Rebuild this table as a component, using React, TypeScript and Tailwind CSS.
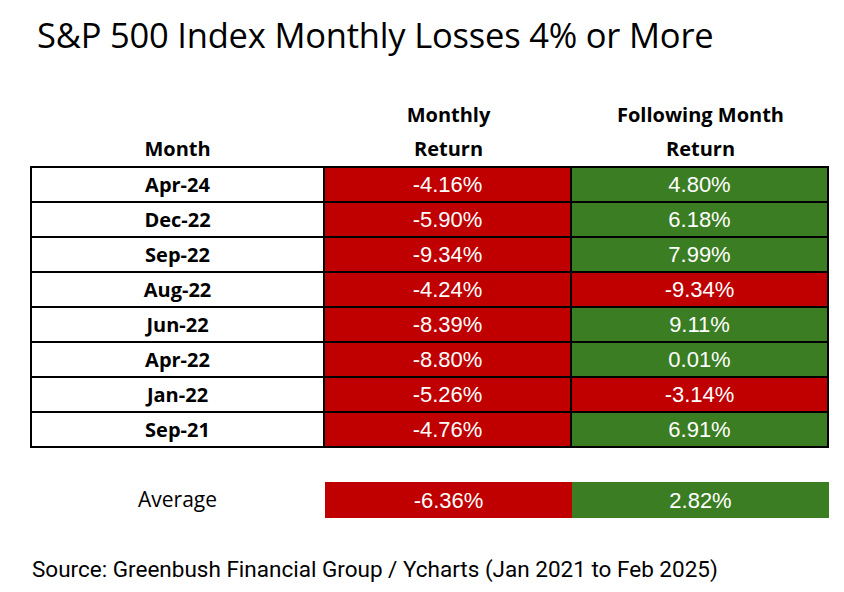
import React from 'react';

type Row = { month: string; ret: string; next: string; nextUp: boolean };

const rows: Row[] = [
  { month: 'Apr-24', ret: '-4.16%', next: '4.80%', nextUp: true },
  { month: 'Dec-22', ret: '-5.90%', next: '6.18%', nextUp: true },
  { month: 'Sep-22', ret: '-9.34%', next: '7.99%', nextUp: true },
  { month: 'Aug-22', ret: '-4.24%', next: '-9.34%', nextUp: false },
  { month: 'Jun-22', ret: '-8.39%', next: '9.11%', nextUp: true },
  { month: 'Apr-22', ret: '-8.80%', next: '0.01%', nextUp: true },
  { month: 'Jan-22', ret: '-5.26%', next: '-3.14%', nextUp: false },
  { month: 'Sep-21', ret: '-4.76%', next: '6.91%', nextUp: true },
];

const head = "font-['Open_Sans',sans-serif] font-bold text-[20px] text-black text-center";
const num = "font-['Liberation_Sans',Arial,sans-serif] text-[22px] text-white text-center";

export default function App() {
  return (
    <div className="w-[844px] h-[592px] bg-white overflow-hidden">
      <h1 className="pl-[37px] pt-[12px] h-[97px] font-['Open_Sans',sans-serif] text-[34.5px] text-black leading-[46px] tracking-[-0.2px]">
        S&amp;P 500 Index Monthly Losses 4% or More
      </h1>

      <div className="ml-[30px] w-[799px]">
        {/* header */}
        <div className="grid grid-cols-[295px_247px_257px]">
          <div className={`${head} h-[35px] leading-[35px]`}></div>
          <div className={`${head} h-[35px] leading-[35px]`}>Monthly</div>
          <div className={`${head} h-[35px] leading-[35px]`}>Following Month</div>
          <div className={`${head} h-[34px] leading-[34px]`}>Month</div>
          <div className={`${head} h-[34px] leading-[34px]`}>Return</div>
          <div className={`${head} h-[34px] leading-[34px]`}>Return</div>
        </div>

        {/* rows */}
        <div className="border-2 border-black">
          {rows.map((r, i) => (
            <div
              key={i}
              className={`grid grid-cols-[293px_247px_255px] ${i > 0 ? 'h-[35px] border-t-2 border-black' : 'h-[33px]'}`}
            >
              <div className={`${head} border-r-2 border-black flex items-center justify-center`}>{r.month}</div>
              <div className={`${num} bg-[#c00000] border-r-2 border-black flex items-center justify-center`}>{r.ret}</div>
              <div className={`${num} ${r.nextUp ? 'bg-[#3b7d23]' : 'bg-[#c00000]'} flex items-center justify-center`}>{r.next}</div>
            </div>
          ))}
        </div>

        {/* average */}
        <div className="grid grid-cols-[295px_247px_257px] h-[36px] mt-[34px]">
          <div className="font-['Open_Sans',sans-serif] text-[21px] text-black flex items-center justify-center">Average</div>
          <div className={`${num} bg-[#c00000] flex items-center justify-center`}>-6.36%</div>
          <div className={`${num} bg-[#3b7d23] flex items-center justify-center`}>2.82%</div>
        </div>
      </div>

      <p className="pl-[32px] mt-[36px] font-['Roboto',sans-serif] text-[22.5px] text-black leading-[30px]">
        Source: Greenbush Financial Group / Ycharts (Jan 2021 to Feb 2025)
      </p>
    </div>
  );
}
